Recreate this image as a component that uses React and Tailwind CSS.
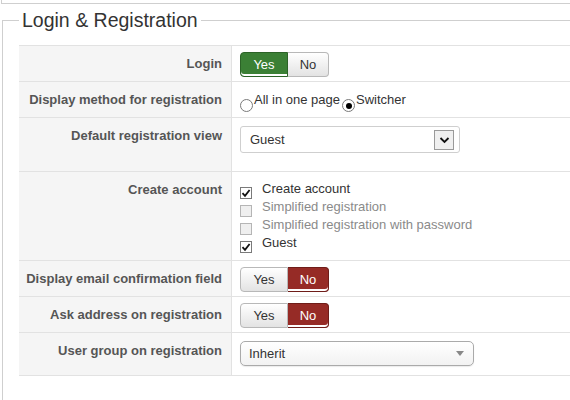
import React from "react";

const font = { fontFamily: '"Liberation Sans", Arial, sans-serif' };

const Row = ({ label, children, valueClass = "" }) => (
    <div className="grid grid-cols-[212px_1fr] border-b border-[#e2e2e2]">
        <div className="bg-[#f5f5f5] pt-[10px] pr-[9px] text-right font-bold text-[13px] leading-[16px] text-[#555]">
            {label}
        </div>
        <div className={`border-l border-[#e2e2e2] pl-[8px] ${valueClass}`}>{children}</div>
    </div>
);

// Yes/No button group; the active half is coloured
const Toggle = ({ value }) => {
    const off = "bg-gradient-to-b from-white to-[#e3e3e3] text-[#333] border-[#b8b8b8]";
    const yesOn = "bg-[#3b8035] text-white border-[#2c6327] shadow-[inset_0_-2px_0_#fff]";
    const noOn = "bg-[#962b26] text-white border-[#6f1d19] shadow-[inset_0_-2px_0_#fff]";
    return (
        <div className="flex h-[25px] text-[13px] leading-[16px]">
            <span className={`flex w-[48px] items-center justify-center rounded-l-[4px] border ${value ? yesOn : off}`}>Yes</span>
            <span className={`flex w-[41px] items-center justify-center rounded-r-[4px] border border-l-0 ${value ? off : noOn}`}>No</span>
        </div>
    );
};

const Radio = ({ checked, label }) => (
    <span className="flex items-end">
        <span className="relative top-[3px] flex h-[13px] w-[13px] items-center justify-center rounded-full border border-[#7a7a7a] bg-white">
            {checked && <span className="h-[6px] w-[6px] rounded-full bg-black" />}
        </span>
        <span className="ml-[1px]">{label}</span>
    </span>
);

const Check = ({ checked, label }) => (
    <div className={`flex h-[18px] items-center ${checked ? "text-[#333]" : "text-[#8a8a8a]"}`}>
        <span
            className={`relative top-[4px] flex h-[12px] w-[12px] items-center justify-center border ${
                checked ? "border-[#7a7a7a] bg-white" : "border-[#b5b5b5] bg-[#efefef]"
            }`}
        >
            {checked && (
                <svg width="10" height="10" viewBox="0 0 10 10">
                    <path d="M1.5 5.2 L4 7.8 L8.6 2" fill="none" stroke="#111" strokeWidth="1.8" />
                </svg>
            )}
        </span>
        <span className="ml-[10px]">{label}</span>
    </div>
);

const App = () => (
    <div className="h-[400px] w-[570px] overflow-hidden bg-white text-[#333]" style={font}>
        <div className="ml-[1px] h-[4px] border-b border-l border-[#cfcfcf]" />
        <fieldset className="ml-[2px] mt-[4px] min-h-[392px] border-l border-t border-[#cfcfcf] pl-[16px] pt-[13px]">
            <legend className="px-[3px] text-[19.5px] leading-[24px] text-[#333]">Login &amp; Registration</legend>
            <div className="border-t border-[#e2e2e2]">
                <Row label="Login" valueClass="pt-[6px] pb-[4px]">
                    <Toggle value={true} />
                </Row>
                <Row label="Display method for registration" valueClass="flex h-[35px] items-center gap-[2px] text-[13px]">
                    <Radio label="All in one page" />
                    <Radio checked label="Switcher" />
                </Row>
                <Row label="Default registration view" valueClass="pt-[8px] pb-[18px]">
                    <div className="flex h-[27px] w-[220px] items-center justify-between rounded-[3px] border border-[#cfcfcf] pl-[9px] pr-[5px] text-[13px]">
                        <span>Guest</span>
                        <span className="flex h-[20px] w-[20px] items-center justify-center border border-[#9a9a9a] bg-[#f0f0f0]">
                            <svg width="11" height="8" viewBox="0 0 11 8">
                                <path d="M1.5 2 L5.5 6 L9.5 2" fill="none" stroke="#111" strokeWidth="1.8" />
                            </svg>
                        </span>
                    </div>
                </Row>
                <Row label="Create account" valueClass="pt-[8px] pb-[8px] text-[13px]">
                    <Check checked label="Create account" />
                    <Check label="Simplified registration" />
                    <Check label="Simplified registration with password" />
                    <Check checked label="Guest" />
                </Row>
                <Row label="Display email confirmation field" valueClass="pt-[6px] pb-[4px]">
                    <Toggle value={false} />
                </Row>
                <Row label="Ask address on registration" valueClass="pt-[6px] pb-[4px]">
                    <Toggle value={false} />
                </Row>
                <Row label="User group on registration" valueClass="pt-[8px] pb-[9px]">
                    <div className="flex h-[25px] w-[234px] items-center justify-between rounded-[5px] border border-[#aaa] bg-gradient-to-b from-white to-[#f2f2f2] pl-[8px] pr-[9px] text-[13px] shadow-[0_1px_1px_rgba(0,0,0,0.08)]">
                        <span>Inherit</span>
                        <svg width="8" height="5" viewBox="0 0 8 5">
                            <path d="M0 0 H8 L4 5 Z" fill="#888" />
                        </svg>
                    </div>
                </Row>
            </div>
        </fieldset>
    </div>
);

export default App;
